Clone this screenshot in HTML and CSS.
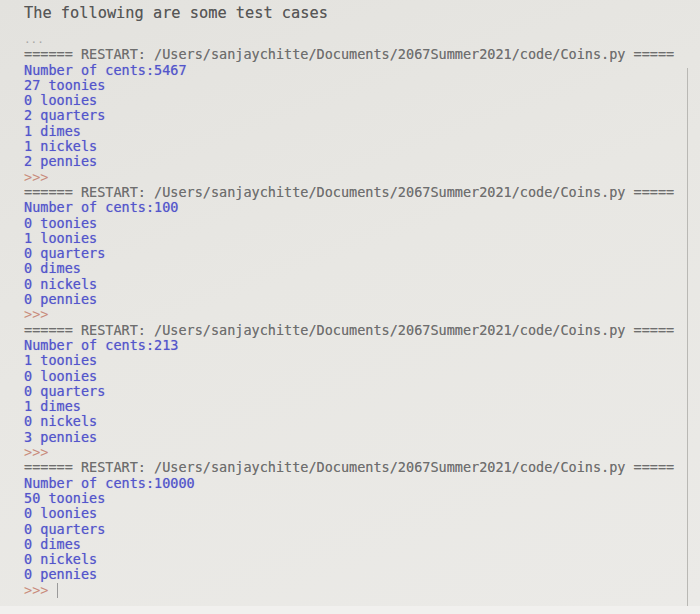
FILE: index.html
```html
<!DOCTYPE html>
<html>
<head>
<meta charset="utf-8">
<link rel="stylesheet" href="styles.css">
</head>
<body>
<div class="screen">
  <div class="title">The following are some test cases</div>
  <div class="console">
    <div class="line dots">...</div>
    <div class="line restart">====== RESTART: /Users/sanjaychitte/Documents/2067Summer2021/code/Coins.py =====</div>
    <div class="line out">Number of cents:5467</div>
    <div class="line out">27 toonies</div>
    <div class="line out">0 loonies</div>
    <div class="line out">2 quarters</div>
    <div class="line out">1 dimes</div>
    <div class="line out">1 nickels</div>
    <div class="line out">2 pennies</div>
    <div class="line prompt">&gt;&gt;&gt;</div>
    <div class="line restart">====== RESTART: /Users/sanjaychitte/Documents/2067Summer2021/code/Coins.py =====</div>
    <div class="line out">Number of cents:100</div>
    <div class="line out">0 toonies</div>
    <div class="line out">1 loonies</div>
    <div class="line out">0 quarters</div>
    <div class="line out">0 dimes</div>
    <div class="line out">0 nickels</div>
    <div class="line out">0 pennies</div>
    <div class="line prompt">&gt;&gt;&gt;</div>
    <div class="line restart">====== RESTART: /Users/sanjaychitte/Documents/2067Summer2021/code/Coins.py =====</div>
    <div class="line out">Number of cents:213</div>
    <div class="line out">1 toonies</div>
    <div class="line out">0 loonies</div>
    <div class="line out">0 quarters</div>
    <div class="line out">1 dimes</div>
    <div class="line out">0 nickels</div>
    <div class="line out">3 pennies</div>
    <div class="line prompt">&gt;&gt;&gt;</div>
    <div class="line restart">====== RESTART: /Users/sanjaychitte/Documents/2067Summer2021/code/Coins.py =====</div>
    <div class="line out">Number of cents:10000</div>
    <div class="line out">50 toonies</div>
    <div class="line out">0 loonies</div>
    <div class="line out">0 quarters</div>
    <div class="line out">0 dimes</div>
    <div class="line out">0 nickels</div>
    <div class="line out">0 pennies</div>
    <div class="line prompt">&gt;&gt;&gt; <span class="caret"></span></div>
  </div>
</div>
</body>
</html>
```
FILE: styles.css
```css
html, body {
  margin: 0;
  padding: 0;
  height: 100%;
}
body {
  background: #f1f0ee;
  overflow: hidden;
}
.screen {
  height: 606px;
  background: linear-gradient(160deg, #e3e2de 0%, #e8e7e3 45%, #ebeae7 100%);
  font-family: "DejaVu Sans Mono", "Liberation Mono", monospace;
}
.title {
  padding: 3px 0 0 24px;
  height: 26px;
  box-sizing: border-box;
  font-size: 15.3px;
  line-height: 20px;
  color: #565656;
  text-shadow: 0 0 0.6px rgba(80,80,80,0.5);
}
.console {
  position: relative;
  margin-top: 6px;
  padding-left: 24px;
  width: 688px;
  box-sizing: border-box;
  font-size: 13.5px;
  line-height: 15.3px;
}
.console::after {
  content: "";
  position: absolute;
  right: 0;
  top: 36px;
  height: 538px;
  border-right: 1px solid #b9b8b4;
}
.line {
  height: 15.3px;
  white-space: pre;
}
.dots {
  color: #a9a8a5;
  font-size: 11px;
}
.restart {
  color: #6e6e6e;
  text-shadow: 0 0 0.6px rgba(90,90,90,0.5);
}
.out {
  color: #5355cc;
  text-shadow: 0 0 0.7px rgba(70,70,200,0.5);
}
.prompt {
  color: #c98c7c;
}
.caret {
  display: inline-block;
  width: 1px;
  height: 15px;
  vertical-align: -3px;
  background: #9a9a9a;
}
```
